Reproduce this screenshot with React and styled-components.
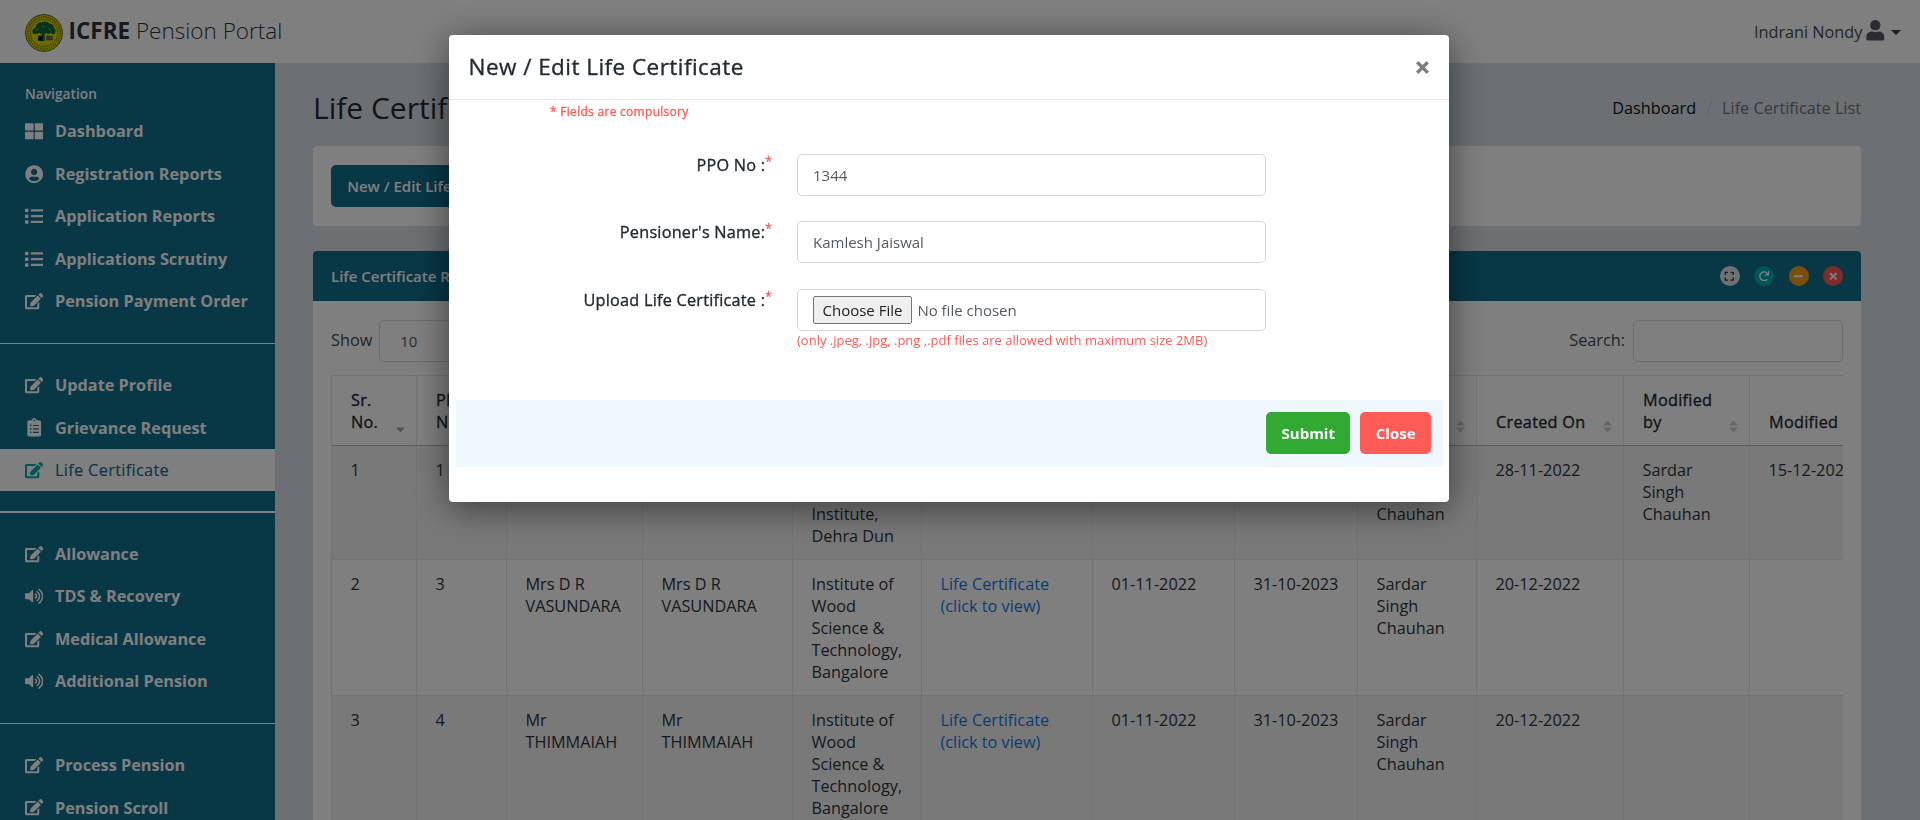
import React from 'react';
import styled, { createGlobalStyle, css } from 'styled-components';
import {
  FaThLarge, FaUserCircle, FaList, FaEdit, FaClipboardList, FaVolumeUp,
  FaUser, FaExpand, FaRedo, FaMinus, FaTimes,
} from 'react-icons/fa';

const GlobalStyle = createGlobalStyle`
  *, *::before, *::after { box-sizing: border-box; }
  html, body { margin: 0; height: 820px; overflow: hidden; }
  body {
    background: #d9e0e7;
    color: #2d353c;
    font-family: "Open Sans", "Liberation Sans", sans-serif;
    font-size: 16.25px;
    line-height: 22px;
  }
`;

/* Open Sans has no medium face here, so the regular one is thickened slightly. */
const mediumText = css`
  font-weight: 400;
  letter-spacing: 0.017em;
  -webkit-text-stroke: 0.35px currentColor;
`;

const Page = styled.div`
  height: 820px;
  display: flex;
  flex-direction: column;
  overflow: hidden;
`;

const Header = styled.header`
  flex: none;
  height: 63px;
  padding: 0 19px 0 25px;
  display: flex;
  align-items: center;
  justify-content: space-between;
  background: #fff;
`;

const Brand = styled.div`
  display: flex;
  align-items: center;
  gap: 5.5px;
  padding-top: 3px;
  font-size: 22.5px;
  font-weight: 300;
  color: #2d353c;
  svg { display: block; }
  b { font-weight: 700; }
`;

const BrandName = styled.span`
  margin-top: -4px;
`;

const UserMenu = styled.div`
  display: flex;
  align-items: center;
  color: #4a4a50;
`;

const UserIcon = styled(FaUser)`
  margin: -2px 5px 0 3px;
  font-size: 20.6px;
  color: #585663;
`;

const Caret = styled.svg`
  width: 10px;
  height: 5px;
  margin-top: 2px;
  fill: #3c3b44;
`;

const Columns = styled.div`
  flex: 1;
  min-height: 0;
  display: flex;
`;

const Sidebar = styled.nav`
  flex: none;
  width: 275px;
  background: #106e8c;
  color: #fff;
  overflow: hidden;
`;

const NavTitle = styled.div`
  height: 47px;
  padding: 20px 25px 0;
  font-size: 13.75px;
  font-weight: 600;
`;

const NavItem = styled.div`
  height: 42.5px;
  padding: 0 25px;
  display: flex;
  align-items: center;
  gap: 11.25px;
  font-weight: 700;
  color: #fff;
  ${(p) => p.$active && css`
    ${mediumText}
    letter-spacing: 0.021em;
    -webkit-text-stroke-width: 0.15px;
    background: #fff;
    color: #106e8c;
  `}
`;

const NavIcon = styled.span`
  flex: none;
  width: 18.75px;
  display: flex;
  justify-content: ${(p) => (p.$center ? 'center' : 'flex-start')};
  font-size: 18.4px;
  color: ${(p) => (p.$active ? '#00acac' : 'inherit')};
  svg { flex: none; width: auto; height: 1em; }
`;

const NavDivider = styled.div`
  height: 1.25px;
  margin: 20px 0;
  background: #fff;
`;

const Content = styled.main`
  flex: 1;
  min-width: 0;
  padding: 25px 59px 0 38px;
`;

const TitleRow = styled.div`
  height: 58px;
  display: flex;
  justify-content: space-between;
  align-items: flex-start;
`;

const PageTitle = styled.h1`
  margin: 0;
  font-size: 30px;
  line-height: 40px;
  font-weight: 400;
  color: #242b31;
`;

const Breadcrumb = styled.div`
  display: flex;
  gap: 10px;
  padding-top: 9px;
  color: #6a747d;
  a { color: #111; }
  i { font-style: normal; color: #c2cad1; }
`;

const Card = styled.section`
  height: 80px;
  margin-bottom: 25px;
  padding: 19px 18px;
  border-radius: 4px;
  background: #fff;
`;

const Button = styled.button`
  height: 42px;
  padding: 0 ${(p) => p.$pad || 15.5}px;
  border: 0;
  border-radius: 5px;
  font: ${(p) => p.$weight || 600} 15px "Open Sans", sans-serif;
  color: #fff;
  background: ${(p) => p.$bg};
`;

const Panel = styled.section`
  height: 700px;
  border-radius: 4px 4px 0 0;
  background: #fff;
`;

const PanelHead = styled.div`
  height: 50px;
  padding: 0 18px;
  display: flex;
  align-items: center;
  justify-content: space-between;
  border-radius: 4px 4px 0 0;
  background: #106e8c;
  color: #fff;
  font-size: 15px;
  font-weight: 600;
`;

const PanelTools = styled.div`
  display: flex;
  gap: 14.5px;
`;

const Tool = styled.span`
  width: 20px;
  height: 20px;
  display: flex;
  align-items: center;
  justify-content: center;
  border-radius: 50%;
  font-size: 10.5px;
  background: ${(p) => p.$bg};
  color: ${(p) => p.$fg || '#fff'};
`;

const PanelBody = styled.div`
  padding: 19px 18px 0;
`;

const TableControls = styled.div`
  height: 55px;
  display: flex;
  justify-content: space-between;
  align-items: flex-start;
  color: #43494f;
`;

const ControlLabel = styled.label`
  display: flex;
  gap: ${(p) => p.$gap}px;
  line-height: 40px;
`;

const fieldBox = css`
  height: 42px;
  padding: 0 15px;
  border: 1px solid #d3d8de;
  border-radius: 5px;
  background: #fff;
  color: #555b62;
  font: 400 15px "Open Sans", sans-serif;
`;

const LengthBox = styled.div`
  ${fieldBox}
  width: 90px;
  padding-left: 20px;
  line-height: 41px;
`;

const SearchBox = styled.input`
  ${fieldBox}
  width: 210px;
`;

const TableClip = styled.div`
  overflow: hidden;
`;

const Table = styled.table`
  width: 1558px;
  table-layout: fixed;
  border-collapse: separate;
  border-spacing: 0;
  border-top: 1px solid #e4e7ea;
`;

const HeadCell = styled.th`
  position: relative;
  height: 70px;
  padding: 12px 28px 12.5px 19px;
  border-left: 1px solid #e4e7ea;
  border-bottom: 1px solid #b6bcc2;
  text-align: left;
  vertical-align: bottom;
  ${mediumText}
  color: #242b31;
`;

const SortMark = styled.svg`
  position: absolute;
  right: 11px;
  bottom: 12px;
  width: 9px;
  height: 13px;
  fill: ${(p) => (p.$on ? '#a0a4a7' : '#c9cdd0')};
`;

const Row = styled.tr`
  height: ${(p) => p.$height}px;
  background: ${(p) => (p.$striped ? '#f2f2f2' : '#fff')};
`;

const Cell = styled.td`
  padding: 12.5px 8px 12px 18.5px;
  border-left: 1px solid #e4e7ea;
  border-bottom: 1px solid #e4e7ea;
  vertical-align: top;
  white-space: pre-line;
`;

const FileLink = styled.a`
  color: #0a7cee;
`;

const Backdrop = styled.div`
  position: fixed;
  inset: 0;
  display: flex;
  justify-content: center;
  align-items: flex-start;
  padding: 35px 22px 0 0;
  background: rgba(0, 0, 0, 0.5);
`;

const Dialog = styled.div`
  width: 1000px;
  height: 467px;
  border-radius: 4px;
  background: #fff;
  box-shadow: 0 6px 36px rgba(0, 0, 0, 0.5);
`;

const DialogHead = styled.div`
  height: 65px;
  padding: 0 20px 0 19.5px;
  display: flex;
  align-items: center;
  justify-content: space-between;
  border-bottom: 1px solid #e2e7eb;
`;

const DialogTitle = styled.h4`
  margin: 0;
  font-size: 22.5px;
  ${mediumText}
  letter-spacing: 0.02em;
  line-height: 30px;
  color: #242b31;
`;

const Dismiss = styled.svg`
  width: 13px;
  height: 13px;
  stroke: #7f7f7f;
  stroke-width: 3.4;
`;

const Required = styled.div`
  height: 54px;
  padding: 1px 0 0 101px;
  font-size: 12px;
  ${mediumText}
  letter-spacing: 0.024em;
  color: #ff5b57;
`;

const FormRow = styled.div`
  height: ${(p) => p.$height}px;
  display: grid;
  grid-template-columns: 323px 469px;
  column-gap: 25px;
  align-items: start;
`;

const FormLabel = styled.label`
  text-align: right;
  ${mediumText}
  letter-spacing: 0.014em;
  color: #242b31;
  sup {
    font-size: 12px;
    line-height: 0;
    vertical-align: 5px;
    color: #ff5b57;
  }
`;

const TextInput = styled.input`
  ${fieldBox}
  width: 100%;
`;

const FileField = styled.div`
  ${fieldBox}
  display: flex;
  align-items: center;
  gap: 5.5px;
`;

const FileButton = styled.button`
  height: 28px;
  padding: 0 8.5px;
  border: 1px solid #767676;
  border-radius: 2px;
  background: #efefef;
  color: #222;
  font: 400 15px "Open Sans", sans-serif;
`;

const Hint = styled.div`
  margin-top: -1px;
  font-size: 13px;
  line-height: 20px;
  color: #ff5b57;
`;

const DialogFoot = styled.div`
  height: 67px;
  margin: 0 6px 0 7px;
  padding: 12px;
  display: flex;
  justify-content: flex-end;
  gap: 10px;
  background: #eff7ff;
`;

const navGroups = [
  [
    [FaThLarge, 'Dashboard'],
    [FaUserCircle, 'Registration Reports'],
    [FaList, 'Application Reports'],
    [FaList, 'Applications Scrutiny'],
    [FaEdit, 'Pension Payment Order'],
  ],
  [
    [FaEdit, 'Update Profile'],
    [FaClipboardList, 'Grievance Request'],
    [FaEdit, 'Life Certificate', true],
  ],
  [
    [FaEdit, 'Allowance'],
    [FaVolumeUp, 'TDS & Recovery'],
    [FaEdit, 'Medical Allowance'],
    [FaVolumeUp, 'Additional Pension'],
  ],
  [
    [FaEdit, 'Process Pension'],
    [FaEdit, 'Pension Scroll'],
  ],
];

const columns = [
  [85, 'Sr. No.'], [90, 'PPO No.'], [136, 'Name'], [150, 'Pensioner'],
  [129, 'Institute'], [171, 'Document'], [142, 'From'], [123, 'To'],
  [119, ''], [147, 'Created On'], [126, 'Modified by'], [140, 'Modified'],
];

const FILE = 'file';
const rows = [
  [114, '1', '1', '', '', 'Forest\nResearch\nInstitute,\nDehra Dun', FILE, '', '', 'Sardar\nSingh\nChauhan', '28-11-2022', 'Sardar\nSingh\nChauhan', '15-12-2022'],
  [136, '2', '3', 'Mrs D R\nVASUNDARA', 'Mrs D R\nVASUNDARA', 'Institute of\nWood\nScience &\nTechnology,\nBangalore', FILE, '01-11-2022', '31-10-2023', 'Sardar\nSingh\nChauhan', '20-12-2022', '', ''],
  [136, '3', '4', 'Mr\nTHIMMAIAH', 'Mr\nTHIMMAIAH', 'Institute of\nWood\nScience &\nTechnology,\nBangalore', FILE, '01-11-2022', '31-10-2023', 'Sardar\nSingh\nChauhan', '20-12-2022', '', ''],
];

function Crest() {
  return (
    <svg width="38" height="38" viewBox="0 0 38 38">
      <circle cx="19" cy="19" r="18.4" fill="#d8d400" stroke="#55561c" strokeWidth="0.9" />
      <circle cx="19" cy="19" r="15.9" fill="none" stroke="#7e7c10" strokeWidth="2" strokeDasharray="1.3 1" />
      <circle cx="19" cy="19" r="13.6" fill="#dcd800" stroke="#6f6d12" strokeWidth="0.7" />
      <path d="M7.500 19c-.6-3 1-5 3-5.400.4-3.600 3.500-5.600 6-5.200 2.600-1.600 6.400-1 8 1.200 3 .2 4.600 2.400 4.500 4.400 1.800 1.200 2 3.400 1 5.200-1.500 1.300-3.300 1-4.500-.4-1.400 1.400-3.200 1.200-4.300.2l-1.700 1.600.3 6.400h-3.200l.3-6.200-2.200-2c-2 1.600-5.400 2-7.200.2z" fill="#0b6b3a" />
      <path d="M10.500 16.500l3-1.500m3.500-3l2.500 1m3.500 1.500l3 1.500" stroke="#9db512" strokeWidth="0.8" />
      <path d="M13 22.500l2-1.300 2.500 1v5l-4.500-.6z" fill="#111" />
      <path d="M21.500 22h6v4h-6zM23 22v4m1.500-4v4m1.500-4v4" fill="#8d9140" stroke="#333" strokeWidth="0.5" />
    </svg>
  );
}

function Sorter({ active }) {
  return (
    <SortMark viewBox="0 0 9 13" $on={active}>
      {!active && <path d="M4.500 0.500L9 5.500H0z" />}
      <path d="M0 7.500h9L4.500 12.500z" />
    </SortMark>
  );
}

export default function App() {
  return (
    <>
      <GlobalStyle />
      <Page>
        <Header>
          <Brand>
            <Crest />
            <BrandName><b>ICFRE</b> Pension Portal</BrandName>
          </Brand>
          <UserMenu>
            Indrani Nondy
            <UserIcon />
            <Caret viewBox="0 0 10 5"><path d="M0 0h10L5 5z" /></Caret>
          </UserMenu>
        </Header>
        <Columns>
          <Sidebar>
            <NavTitle>Navigation</NavTitle>
            {navGroups.map((group, g) => (
              <React.Fragment key={g}>
                {g > 0 && <NavDivider />}
                {group.map(([Icon, label, active]) => (
                  <NavItem key={label} $active={active}>
                    <NavIcon $active={active} $center={Icon === FaClipboardList}><Icon /></NavIcon>
                    {label}
                  </NavItem>
                ))}
              </React.Fragment>
            ))}
          </Sidebar>
          <Content>
            <TitleRow>
              <PageTitle>Life Certificate List</PageTitle>
              <Breadcrumb>
                <a>Dashboard</a>
                <i>/</i>
                <span>Life Certificate List</span>
              </Breadcrumb>
            </TitleRow>
            <Card>
              <Button $bg="#106e8c" $pad={16.2}>New / Edit Life Certificate</Button>
            </Card>
            <Panel>
              <PanelHead>
                Life Certificate Records
                <PanelTools>
                  <Tool $bg="#dee2e6" $fg="#2d353c"><FaExpand /></Tool>
                  <Tool $bg="#00acac"><FaRedo /></Tool>
                  <Tool $bg="#f59c1a"><FaMinus /></Tool>
                  <Tool $bg="#ff5b57"><FaTimes /></Tool>
                </PanelTools>
              </PanelHead>
              <PanelBody>
                <TableControls>
                  <ControlLabel $gap={7}>Show <LengthBox>10</LengthBox></ControlLabel>
                  <ControlLabel $gap={8}>Search: <SearchBox /></ControlLabel>
                </TableControls>
                <TableClip>
                  <Table>
                    <colgroup>
                      {columns.map(([w], i) => <col key={i} width={w} />)}
                    </colgroup>
                    <thead>
                      <tr>
                        {columns.map(([, name], i) => (
                          <HeadCell key={i}>{name}<Sorter active={i === 0} /></HeadCell>
                        ))}
                      </tr>
                    </thead>
                    <tbody>
                      {rows.map(([height, ...cells], r) => (
                        <Row key={r} $height={height} $striped={r % 2 === 0}>
                          {cells.map((value, c) => (
                            <Cell key={c}>
                              {value === FILE
                                ? <FileLink>Life Certificate{'\n'}(click to view)</FileLink>
                                : value}
                            </Cell>
                          ))}
                        </Row>
                      ))}
                    </tbody>
                  </Table>
                </TableClip>
              </PanelBody>
            </Panel>
          </Content>
        </Columns>
      </Page>
      <Backdrop>
        <Dialog>
          <DialogHead>
            <DialogTitle>New / Edit Life Certificate</DialogTitle>
            <Dismiss viewBox="0 0 13 13"><path d="M1.200 1.200l10.600 10.600M11.800 1.200L1.200 11.800" /></Dismiss>
          </DialogHead>
          <Required>* Fields are compulsory</Required>
          <FormRow $height={67}>
            <FormLabel>PPO No :<sup>*</sup></FormLabel>
            <TextInput defaultValue="1344" />
          </FormRow>
          <FormRow $height={68}>
            <FormLabel>Pensioner's Name:<sup>*</sup></FormLabel>
            <TextInput defaultValue="Kamlesh Jaiswal" />
          </FormRow>
          <FormRow $height={111}>
            <FormLabel>Upload Life Certificate :<sup>*</sup></FormLabel>
            <div>
              <FileField>
                <FileButton>Choose File</FileButton>
                No file chosen
              </FileField>
              <Hint>(only .jpeg, .jpg, .png ,.pdf files are allowed with maximum size 2MB)</Hint>
            </div>
          </FormRow>
          <DialogFoot>
            <Button $bg="#32a932" $weight={700} $pad={15.3}>Submit</Button>
            <Button $bg="#ff5b57" $weight={700}>Close</Button>
          </DialogFoot>
        </Dialog>
      </Backdrop>
    </>
  );
}
